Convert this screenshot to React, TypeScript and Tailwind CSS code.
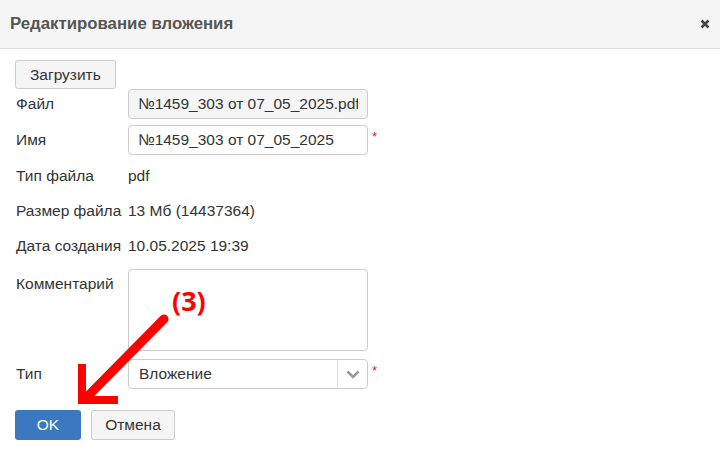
import React from 'react';

const font = { fontFamily: '"Liberation Sans", Arial, sans-serif' };

const Row = ({ label, children, className = '' }: { label: string; children: React.ReactNode; className?: string }) => (
    <div className={`flex items-center ${className}`}>
        <div className="w-[113px] shrink-0 pl-px">{label}</div>
        {children}
    </div>
);

const Req = () => <span className="ml-[4px] self-start mt-[2px] text-[13px] text-[#e02020]">*</span>;

export default function App() {
    return (
        <div className="relative w-[720px] h-[456px] overflow-hidden bg-white text-[15.5px] text-[#333]" style={font}>
            {/* Header */}
            <div className="flex items-center justify-between h-[49px] bg-[#f5f5f5] border-b border-[#dddddd] pl-[10px] pr-[10px]">
                <h2 className="text-[16.8px] font-bold text-[#555]">Редактирование вложения</h2>
                <button className="text-[#444]">
                    <svg width="10" height="10" viewBox="0 0 10 10">
                        <path d="M1.5 1.5 L8.5 8.5 M8.5 1.5 L1.5 8.5" stroke="#444" strokeWidth="2.6" />
                    </svg>
                </button>
            </div>

            {/* Body */}
            <div className="flex flex-col px-[15px] pt-[11px]">
                <div>
                    <button className="h-[29px] px-[14px] bg-[#f5f5f5] border border-[#cccccc] rounded-[3px]">
                        Загрузить
                    </button>
                </div>

                <Row label="Файл">
                    <input
                        readOnly
                        value="№1459_303 от 07_05_2025.pdf"
                        className="w-[240px] h-[30px] px-[9px] bg-[#f5f5f5] border border-[#cccccc] rounded-[4px] outline-none"
                    />
                </Row>

                <Row label="Имя" className="mt-[6px]">
                    <input
                        readOnly
                        value="№1459_303 от 07_05_2025"
                        className="w-[240px] h-[30px] px-[9px] bg-white border border-[#cccccc] rounded-[4px] outline-none"
                    />
                    <Req />
                </Row>

                <Row label="Тип файла" className="h-[30px] mt-[6px]">
                    <span>pdf</span>
                </Row>
                <Row label="Размер файла" className="h-[30px] mt-[5px]">
                    <span>13 Мб (14437364)</span>
                </Row>
                <Row label="Дата создания" className="h-[30px] mt-[5px]">
                    <span>10.05.2025 19:39</span>
                </Row>

                <div className="flex items-start mt-[8px]">
                    <div className="w-[113px] shrink-0 pl-px pt-[3px]">Комментарий</div>
                    <textarea className="w-[240px] h-[82px] border border-[#cccccc] rounded-[4px] resize-none outline-none" />
                </div>

                <Row label="Тип" className="mt-[8px]">
                    <div className="flex w-[240px] h-[30px] border border-[#cccccc] rounded-[4px] bg-white">
                        <div className="flex-1 flex items-center pl-[10px]">Вложение</div>
                        <div className="w-[30px] flex items-center justify-center border-l border-[#dddddd]">
                            <svg width="14" height="9" viewBox="0 0 14 9">
                                <path d="M1.5 1.5 L7 7 L12.5 1.5" fill="none" stroke="#9a9a9a" strokeWidth="2.6" />
                            </svg>
                        </div>
                    </div>
                    <Req />
                </Row>

                <div className="flex gap-[10px] mt-[21px]">
                    <button className="w-[66px] h-[30px] bg-[#3b78c0] text-white rounded-[3px]">OK</button>
                    <button className="w-[84px] h-[30px] bg-[#f5f5f5] border border-[#cccccc] rounded-[3px]">Отмена</button>
                </div>
            </div>

            {/* annotation */}
            <svg className="absolute left-0 top-0 pointer-events-none" width="720" height="456">
                <path d="M164 319 L86 398" stroke="#ff0000" strokeWidth="9" strokeLinecap="round" />
                <path d="M82 364 L82 400 L118 400" fill="none" stroke="#ff0000" strokeWidth="8" strokeLinejoin="miter" />
            </svg>
            <div
                className="absolute left-[172px] top-[287px] text-[27px] font-bold text-[#ff0000] leading-none"
                style={{ fontFamily: '"Open Sans", sans-serif' }}
            >
                (3)
            </div>
        </div>
    );
}
